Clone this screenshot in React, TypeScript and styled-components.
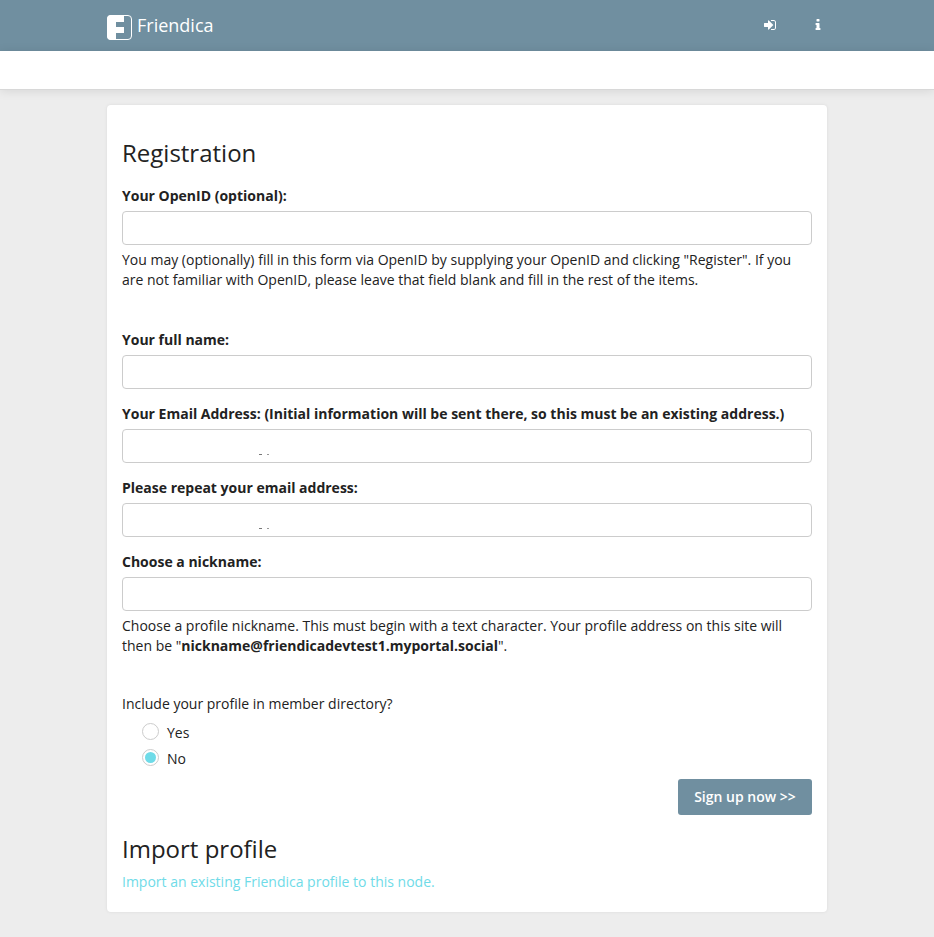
import React from "react";
import styled, { createGlobalStyle } from "styled-components";

const Global = createGlobalStyle`
  *, *::before, *::after { box-sizing: border-box; }
  body {
    margin: 0;
    background: #ececec;
    color: #222;
    font: 14px/20px "Open Sans", sans-serif;
  }
  input, button { font: inherit; color: inherit; }
`;

const Page = styled.div`
  min-height: 937px;
  background: #ededed;
`;

const Bar = styled.header`
  height: 51px;
  padding: 0 107px;
  background: #708fa0;
  color: #fff;
  display: flex;
  justify-content: space-between;
`;

const Brand = styled.a`
  display: flex;
  align-items: flex-start;
  gap: 5px;
  padding-top: 15px;
  font-size: 18px;
  line-height: 20px;
  color: #fff;
`;

const Actions = styled.nav`
  display: flex;
  gap: 34px;
  padding: 18px 2px 0 0;
`;

const IconButton = styled.a`
  display: block;
  width: 14px;
  height: 14px;
  svg { display: block; fill: #fff; }
`;

const SubBar = styled.div`
  height: 39px;
  background: #fff;
  border-bottom: 1px solid #d8d8d8;
  box-shadow: 0 1px 10px rgba(0, 0, 0, 0.1);
`;

const Card = styled.main`
  width: 720px;
  height: 807px;
  margin: 15px auto 0;
  padding: 35px 15px 0;
  background: #fff;
  border-radius: 4px;
  box-shadow: 0 0 3px #dadada;
`;

const Heading = styled.h2`
  margin: 0;
  font-size: 24px;
  font-weight: 400;
  line-height: 26px;
`;

const Form = styled.form`
  display: flex;
  flex-direction: column;
  padding-top: 20px;
`;

const Field = styled.div<{ $after?: number }>`
  margin-bottom: ${(p) => p.$after ?? 15}px;
`;

const Label = styled.label`
  display: block;
  margin-bottom: 5px;
  font-weight: 700;
`;

const InputBox = styled.input`
  display: block;
  width: 100%;
  height: 34px;
  padding: 6px 12px;
  border: 1px solid #ccc;
  border-radius: 4px;
  background: #fff;
`;

const InputFrame = styled.div`
  height: 34px;
  padding: 24px 0 0 136px;
  border: 1px solid #ccc;
  border-radius: 4px;
  svg { display: block; }
`;

const Help = styled.p`
  margin: 5px 0 0;
  font-kerning: none;
`;

const Options = styled.div`
  display: flex;
  flex-direction: column;
  gap: 6px;
  padding: 9px 0 0 20px;
`;

const Option = styled.label`
  display: flex;
  gap: 8px;
  height: 20px;
`;

const Radio = styled.span<{ $on?: boolean }>`
  width: 17px;
  height: 17px;
  border: 1px solid #ccc;
  border-radius: 50%;
  display: grid;
  place-items: center;
  &::after {
    content: "";
    width: 11px;
    height: 11px;
    border-radius: 50%;
    background: ${(p) => (p.$on ? "#6fdbe8" : "transparent")};
  }
`;

const Submit = styled.button`
  align-self: flex-end;
  width: 134px;
  height: 36px;
  margin: 10px 0 21px;
  padding: 0;
  border: 0;
  border-radius: 3px;
  background: #708fa0;
  color: #fff;
  font-weight: 600;
`;

const ImportLink = styled.a`
  display: block;
  margin-top: 10px;
  color: #6fdbe8;
`;

const Logo = () => (
  <svg width="25" height="25" viewBox="0 0 25 25">
    <rect x="0.5" y="0.5" width="24" height="24" rx="3.5" fill="none" stroke="#fff" />
    <path
      fill="#fff"
      d="M4 0H17V7H9V12H17V18H9V25H4Q0 25 0 21V4Q0 0 4 0Z"
    />
  </svg>
);

const Glyph = ({ d }: { d: string }) => (
  <svg width="14" height="14" viewBox="0 0 1792 1792">
    <path d={d} />
  </svg>
);

const signIn =
  "M1312 896q0 26-19 45l-544 544q-19 19-45 19t-45-19-19-45v-288h-448q-26 0-45-19t-19-45v-384q0-26 19-45t45-19h448v-288q0-26 19-45t45-19 45 19l544 544q19 19 19 45zm352-352v704q0 119-84.5 203.5t-203.5 84.5h-320q-13 0-22.5-9.5t-9.5-22.5q0-4-1-20t-.5-26.5 3-23.5 10-19.5 20.5-6.5h320q66 0 113-47t47-113v-704q0-66-47-113t-113-47h-312l-11.5-1-11.5-3-8-5.5-7-9-2-13.5q0-4-1-20t-.5-26.5 3-23.5 10-19.5 20.5-6.5h320q119 0 203.5 84.5t84.5 203.5z";
const info =
  "M1216 1344v128q0 26-19 45t-45 19h-512q-26 0-45-19t-19-45v-128q0-26 19-45t45-19h64v-384h-64q-26 0-45-19t-19-45v-128q0-26 19-45t45-19h384q26 0 45 19t19 45v576h64q26 0 45 19t19 45zm-128-1152v192q0 26-19 45t-45 19h-256q-26 0-45-19t-19-45v-192q0-26 19-45t45-19h256q26 0 45 19t19 45z";

const MarkedInput = () => (
  <InputFrame>
    <svg width="12" height="1" viewBox="0 0 12 1">
      <rect x="0" width="3" height="1" fill="#777" />
      <rect x="8" width="2" height="1" fill="#999" />
    </svg>
  </InputFrame>
);

export default function App() {
  return (
    <>
      <Global />
      <Page>
        <Bar>
          <Brand>
            <Logo />
            Friendica
          </Brand>
          <Actions>
            <IconButton aria-label="Sign in">
              <Glyph d={signIn} />
            </IconButton>
            <IconButton aria-label="Information">
              <Glyph d={info} />
            </IconButton>
          </Actions>
        </Bar>
        <SubBar />
        <Card>
          <Heading>Registration</Heading>
          <Form>
            <Field $after={40}>
              <Label htmlFor="openid">Your OpenID (optional):</Label>
              <InputBox id="openid" />
              <Help>
                You may (optionally) fill in this form via OpenID by supplying your OpenID and
                clicking "Register". If you are not familiar with OpenID, please leave that field
                blank and fill in the rest of the items.
              </Help>
            </Field>
            <Field>
              <Label htmlFor="name">Your full name:</Label>
              <InputBox id="name" />
            </Field>
            <Field>
              <Label>
                Your Email Address: (Initial information will be sent there, so this must be an
                existing address.)
              </Label>
              <MarkedInput />
            </Field>
            <Field>
              <Label>Please repeat your email address:</Label>
              <MarkedInput />
            </Field>
            <Field $after={38}>
              <Label htmlFor="nick">Choose a nickname:</Label>
              <InputBox id="nick" />
              <Help>
                Choose a profile nickname. This must begin with a text character. Your profile
                address on this site will then be "
                <strong>nickname@friendicadevtest1.myportal.social</strong>".
              </Help>
            </Field>
            <div>Include your profile in member directory?</div>
            <Options>
              <Option>
                <Radio />
                Yes
              </Option>
              <Option>
                <Radio $on />
                No
              </Option>
            </Options>
            <Submit type="button">Sign up now &gt;&gt;</Submit>
          </Form>
          <Heading>Import profile</Heading>
          <ImportLink>Import an existing Friendica profile to this node.</ImportLink>
        </Card>
      </Page>
    </>
  );
}
